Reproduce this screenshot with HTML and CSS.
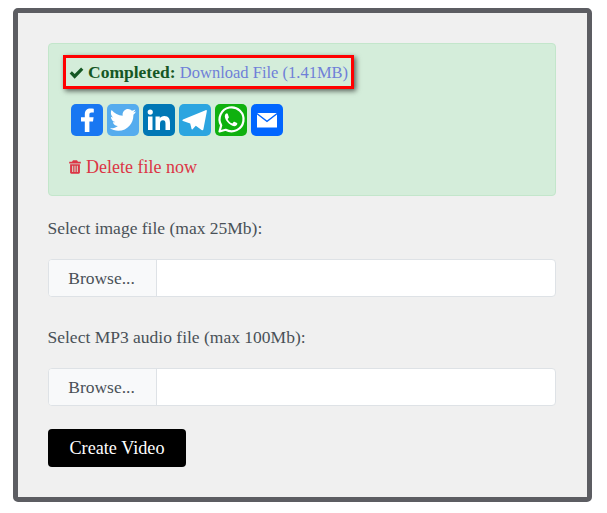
FILE: index.html
```html
<!DOCTYPE html>
<html lang="en">
<head>
<meta charset="utf-8">
<title>Create Video</title>
<link rel="stylesheet" href="styles.css">
</head>
<body>
<main class="panel">
  <section class="alert">
    <div class="status">
      <svg class="ico-check" viewBox="0 0 16 13" aria-hidden="true"><path d="M0.6 7 L3 4.6 L6 7.6 L13 0.6 L15.4 3 L6 12.6 Z" fill="#155724"/></svg>
      <span class="status-text"><strong>Completed:</strong> <a href="#" class="link">Download File (1.41MB)</a></span>
    </div>
    <div class="shares">
      <a href="#" class="share fb"><svg viewBox="0 0 32 32"><path d="M18.4 28 V17.6 H22 L22.6 13.2 H18.4 V10.8 C18.4 9.4 19 8.6 20.6 8.6 H22.8 V4.7 C22.2 4.6 20.8 4.5 19.4 4.5 C16 4.5 13.8 6.5 13.8 10.2 V13.2 H10 V17.6 H13.8 V28 Z" fill="#fff"/></svg></a>
      <a href="#" class="share tw"><svg viewBox="0 0 32 32"><path d="M29 7.6 C28 8 27 8.4 25.9 8.5 C27 7.8 27.9 6.8 28.3 5.5 C27.3 6.1 26.1 6.6 24.9 6.8 C23.9 5.7 22.5 5 21 5 C18 5 15.6 7.5 15.6 10.5 C15.6 10.9 15.6 11.4 15.7 11.8 C11.3 11.6 7.3 9.4 4.6 6.1 C4.1 6.9 3.9 7.9 3.9 8.9 C3.9 10.8 4.8 12.4 6.3 13.4 C5.4 13.4 4.6 13.1 3.9 12.7 V12.8 C3.9 15.4 5.8 17.6 8.2 18.1 C7.4 18.3 6.5 18.4 5.8 18.2 C6.5 20.4 8.5 22 10.9 22 C9 23.5 6.7 24.3 4.2 24.3 C3.8 24.3 3.3 24.3 2.9 24.2 C5.3 25.8 8.2 26.7 11.2 26.7 C21 26.7 26.4 18.5 26.4 11.4 V10.7 C27.5 9.9 28.4 8.9 29 7.6 Z" fill="#fff"/></svg></a>
      <a href="#" class="share li"><svg viewBox="0 0 32 32"><path d="M5 12.5 H9.5 V26 H5 Z M7.25 5.5 A2.6 2.6 0 1 1 7.25 10.7 A2.6 2.6 0 1 1 7.25 5.5 Z M12.5 12.5 H16.8 V14.4 C17.6 13 19.2 12.1 21.3 12.1 C25.8 12.1 27 15 27 19 V26 H22.5 V19.8 C22.5 17.9 22.1 16.2 20 16.2 C17.8 16.2 17 17.7 17 19.8 V26 H12.5 Z" fill="#fff"/></svg></a>
      <a href="#" class="share tg"><svg viewBox="0 0 32 32"><path d="M4 15.4 L26.6 6.2 C27.4 5.9 28 6.4 27.8 7.4 L24.4 25.2 C24.2 26.2 23.4 26.4 22.6 25.9 L16.8 21.8 L13.6 25.2 C13.2 25.6 12.6 25.4 12.5 24.8 L11.2 19.4 L4 17 C3.2 16.7 3.2 15.8 4 15.4 Z" fill="#fff"/></svg></a>
      <a href="#" class="share wa"><svg viewBox="0 0 32 32"><path d="M4.5 27.5 L6.2 21.4 A12 12 0 1 1 10.7 25.8 Z" fill="none" stroke="#fff" stroke-width="2.2" stroke-linejoin="round"/><path d="M11.9 9.3 C11.3 9.3 10.4 10 10 11 C9.4 12.8 10.2 15.2 12.2 17.8 C14.3 20.4 16.8 22 19.2 22.2 C20.7 22.3 22 21.3 22.3 20 C22.4 19.5 22.3 19.2 22 19 L19.4 17.7 C19.1 17.6 18.8 17.7 18.6 18 L17.6 19.2 C17.4 19.4 17.2 19.5 16.8 19.3 C15 18.5 13.7 17.2 12.8 15.4 C12.7 15.1 12.7 14.9 12.9 14.7 L13.7 13.7 C13.9 13.4 13.9 13.2 13.8 12.9 L12.8 10 C12.6 9.5 12.3 9.3 11.9 9.3 Z" fill="#fff"/></svg></a>
      <a href="#" class="share em"><svg viewBox="0 0 32 32"><path d="M6.2 9 H25.8 L16 16.4 Z M6 10.6 V23.4 H26 V10.6 L16 18.2 Z" fill="#fff"/></svg></a>
    </div>
    <a href="#" class="delete">
      <svg class="ico-trash" viewBox="0 0 12 14" aria-hidden="true"><path fill-rule="evenodd" d="M4 0.2 H8 L9 1.8 H11.8 V3.4 H0.2 V1.8 H3 Z M1.1 4.2 H10.9 V12.6 C10.9 13.3 10.4 13.8 9.7 13.8 H2.3 C1.6 13.8 1.1 13.3 1.1 12.6 Z M3.2 5.8 V12 H4.2 V5.8 Z M5.5 5.8 V12 H6.5 V5.8 Z M7.8 5.8 V12 H8.8 V5.8 Z" fill="#dc3545"/></svg>
      <span class="delete-text">Delete file now</span>
    </a>
  </section>

  <label class="field-label">Select image file (max 25Mb):</label>
  <div class="file"><span class="browse">Browse...</span><span class="file-name"></span></div>

  <label class="field-label second">Select MP3 audio file (max 100Mb):</label>
  <div class="file"><span class="browse">Browse...</span><span class="file-name"></span></div>

  <button class="submit" type="button">Create Video</button>
</main>
</body>
</html>
```
FILE: styles.css
```css
* { box-sizing: border-box; }
html, body { background: #fff; }
body {
  margin: 0;
  padding: 8px 15px 11px 13px;
  font-family: "Liberation Serif", "DejaVu Serif", serif;
  font-size: 17.5px;
  line-height: 24px;
  color: #495057;
}
.panel {
  border: 5px solid #5c5d62;
  border-radius: 5px;
  background: #f0f0f0;
  padding: 30px 31px 30px 30px;
  height: 494px;
}
.alert {
  height: 153px;
  background: #d4edda;
  border: 1px solid #c3e6cb;
  border-radius: 4px;
  padding: 11px 0 0 14px;
  color: #155724;
}
.status {
  display: inline-flex;
  align-items: center;
  height: 34px;
  padding: 1px 3px 0 3px;
  border: 3px solid #f00;
  box-shadow: 2px 2px 5px rgba(0, 0, 0, 0.6);
  white-space: pre;
  vertical-align: top;
}
.ico-check { width: 15px; height: 12px; margin-right: 4px; }
.link { color: #6f7fd8; text-decoration: none; font-size: 16.5px; }
.shares { display: flex; gap: 4px; margin: 15px 0 0 8px; }
.share { display: block; width: 32px; height: 32px; border-radius: 5px; }
.share svg { display: block; width: 32px; height: 32px; }
.fb { background: #1877f2; }
.tw { background: #55acee; }
.li { background: #0077b5; }
.tg { background: #2ca5e0; }
.wa { background: #0fb10f; }
.em { background: #0066ff; }
.delete {
  display: flex;
  align-items: center;
  gap: 5px;
  margin: 19px 0 0 6px;
  color: #dc3545;
  text-decoration: none;
}
.delete-text { font-size: 18px; }
.ico-trash { width: 12px; height: 14px; }
.field-label { display: block; margin-top: 20px; margin-left: -0.5px; }
.field-label.second { margin-top: 28px; }
.file {
  display: flex;
  height: 38px;
  margin-top: 19px;
  border: 1px solid #dee2e6;
  border-radius: 4px;
  background: #fff;
  overflow: hidden;
}
.browse {
  width: 108px;
  padding-right: 2px;
  background: #f8f9fa;
  border-right: 1px solid #dee2e6;
  text-align: center;
  line-height: 36px;
}
.file-name { flex: 1; }
.submit {
  display: block;
  width: 138px;
  height: 38px;
  margin-top: 23px;
  background: #000;
  color: #fff;
  border: 0;
  border-radius: 4px;
  font: inherit;
  font-size: 18.2px;
}
```
